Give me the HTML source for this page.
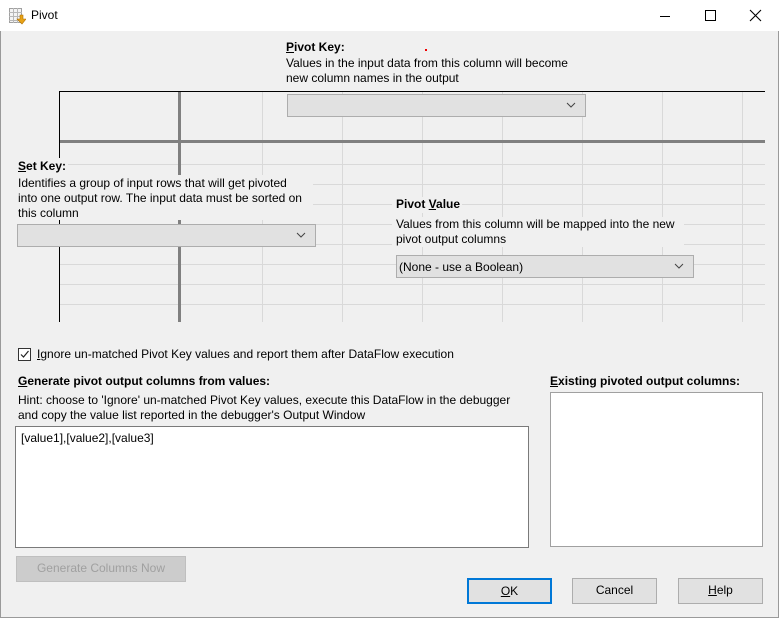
<!DOCTYPE html>
<html><head><style>
*{margin:0;padding:0;box-sizing:border-box}
body{width:779px;height:618px;background:#f0f0f0;font-family:"Liberation Sans",sans-serif;font-size:12px;color:#000;position:relative;overflow:hidden}
.a{position:absolute;white-space:nowrap}
.tb{position:absolute;left:0;top:0;width:779px;height:31px;background:#fff}
.b{font-weight:bold}
.lbl{background:#f0f0f0;line-height:15px}
.cb{position:absolute;background:#e1e1e1;border:1px solid #adadad}
.cb .ch{position:absolute;right:9px;top:4px}
.btn{position:absolute;background:#e1e1e1;border:1px solid #adadad;text-align:center;line-height:23px}
.h{position:absolute;background:#d9d9d9;height:1px}
.v{position:absolute;background:#d9d9d9;width:1px}
</style></head><body>
<div class="tb"></div>
<svg class="a" style="left:9px;top:8px" width="17" height="17" viewBox="0 0 17 17">
<rect x="0.5" y="0.5" width="12" height="14" fill="#f4f4f4" stroke="#a0a0a0"/>
<path d="M0 4.5H13M0 8.5H13M0 12.5H13M4.5 0V15M8.5 0V15" stroke="#b8b8b8"/>
<path d="M11 7v4h-3l5 5 4-5h-3V7z" fill="#e8a317" stroke="#b07000" stroke-width=".6"/>
</svg>
<div class="a" style="left:31px;top:8px;font-size:12px">Pivot</div>
<svg class="a" style="left:655px;top:8px" width="110" height="16">
<path d="M5 8.5H15" stroke="#000"/>
<rect x="50.5" y="2.5" width="10" height="10" fill="none" stroke="#000"/>
<path d="M95 2L106 13M106 2L95 13" stroke="#000" stroke-width="1.1"/>
</svg>
<div style="position:absolute;left:0;top:31px;width:1px;height:587px;background:#9a9a9a"></div>
<div style="position:absolute;right:0;top:31px;width:1px;height:587px;background:#9a9a9a"></div>
<div style="position:absolute;left:0;bottom:0;width:779px;height:1px;background:#9a9a9a"></div>

<!-- grid -->
<div class="h" style="left:60px;top:164px;width:705px"></div>
<div class="h" style="left:60px;top:184px;width:705px"></div>
<div class="h" style="left:60px;top:204px;width:705px"></div>
<div class="h" style="left:60px;top:224px;width:705px"></div>
<div class="h" style="left:60px;top:244px;width:705px"></div>
<div class="h" style="left:60px;top:264px;width:705px"></div>
<div class="h" style="left:60px;top:284px;width:705px"></div>
<div class="h" style="left:60px;top:304px;width:705px"></div>
<div class="v" style="left:262px;top:92px;height:230px"></div>
<div class="v" style="left:342px;top:92px;height:230px"></div>
<div class="v" style="left:422px;top:92px;height:230px"></div>
<div class="v" style="left:502px;top:92px;height:230px"></div>
<div class="v" style="left:582px;top:92px;height:230px"></div>
<div class="v" style="left:662px;top:92px;height:230px"></div>
<div class="v" style="left:742px;top:92px;height:230px"></div>
<div style="position:absolute;left:60px;top:91px;width:705px;height:1px;background:#000"></div>
<div style="position:absolute;left:59px;top:91px;width:1px;height:231px;background:#000"></div>
<div style="position:absolute;left:60px;top:140px;width:705px;height:3px;background:#808080"></div>
<div style="position:absolute;left:178px;top:92px;width:3px;height:230px;background:#808080"></div>

<!-- Pivot key -->
<div class="a lbl" style="left:286px;top:40px;width:290px;height:46px">
<div class="b" style="height:16px"><u>P</u>ivot Key:</div>
<div>Values in the input data from this column will become</div>
<div>new column names in the output</div></div>
<div class="a" style="left:425px;top:49px;width:2px;height:2px;background:#e00"></div>
<div class="cb" style="left:287px;top:94px;width:299px;height:23px"><svg class="ch" width="10" height="12"><path d="M1 4l4 4 4-4" fill="none" stroke="#444"/></svg></div>

<!-- Set key -->
<div class="a lbl b" style="left:14px;top:158px;width:54px;height:17px;padding-left:4px;padding-top:1px"><u>S</u>et Key:</div>
<div class="a lbl" style="left:14px;top:175px;width:299px;height:45px;padding-left:4px;padding-top:1px">
<div>Identifies a group of input rows that will get pivoted</div>
<div>into one output row. The input data must be sorted on</div>
<div>this column</div></div>
<div class="cb" style="left:17px;top:224px;width:299px;height:23px"><svg class="ch" width="10" height="12"><path d="M1 4l4 4 4-4" fill="none" stroke="#444"/></svg></div>

<!-- Pivot value -->
<div class="a lbl b" style="left:392px;top:197px;width:70px;height:16px;padding-left:4px;padding-top:0px">Pivot <u>V</u>alue</div>
<div class="a lbl" style="left:392px;top:217px;width:292px;height:30px;padding-left:4px">
<div>Values from this column will be mapped into the new</div>
<div>pivot output columns</div></div>
<div class="cb" style="left:396px;top:255px;width:298px;height:23px"><div class="a" style="left:2px;top:4px">(None - use a Boolean)</div><svg class="ch" width="10" height="12"><path d="M1 4l4 4 4-4" fill="none" stroke="#444"/></svg></div>

<!-- bottom -->
<div class="a" style="left:18px;top:348px;width:13px;height:13px;background:#fff;border:1px solid #333"></div>
<svg class="a" style="left:19px;top:349px" width="11" height="11"><path d="M2 5.5l2.5 2.5 5-6" fill="none" stroke="#222" stroke-width="1.2"/></svg>
<div class="a" style="left:37px;top:347px"><u>I</u>gnore un-matched Pivot Key values and report them after DataFlow execution</div>

<div class="a b" style="left:18px;top:374px"><u>G</u>enerate pivot output columns from values:</div>
<div class="a" style="left:18px;top:393px;line-height:15px">Hint: choose to 'Ignore' un-matched Pivot Key values, execute this DataFlow in the debugger<br>and copy the value list reported in the debugger's Output Window</div>
<div class="a" style="left:15px;top:426px;width:514px;height:122px;background:#fff;border:1px solid #7a7a7a"><div class="a" style="left:5px;top:4px">[value1],[value2],[value3]</div></div>

<div class="a b" style="left:550px;top:374px"><u>E</u>xisting pivoted output columns:</div>
<div class="a" style="left:550px;top:392px;width:213px;height:155px;background:#fff;border:1px solid #a0a0a0"></div>

<div class="btn" style="left:16px;top:556px;width:170px;height:26px;background:#cccccc;border-color:#bfbfbf;color:#a0a0a0">Generate Columns Now</div>
<div class="btn" style="left:467px;top:578px;width:85px;height:26px;border:2px solid #0078d7;line-height:22px"><u>O</u>K</div>
<div class="btn" style="left:572px;top:578px;width:85px;height:26px">Cancel</div>
<div class="btn" style="left:678px;top:578px;width:85px;height:26px"><u>H</u>elp</div>
</body></html>
